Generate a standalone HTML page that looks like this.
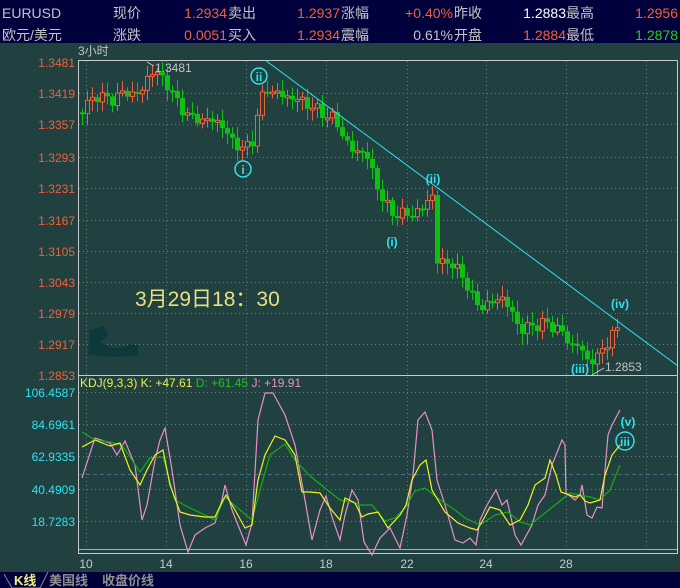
<!DOCTYPE html>
<html><head><meta charset="utf-8">
<style>
*{margin:0;padding:0}
body{width:680px;height:588px;background:#214141;position:relative;overflow:hidden;font-family:"Liberation Sans","Noto Sans CJK SC",sans-serif}
#hdr{position:absolute;left:0;top:0;width:680px;height:43px;background:#00003c}
.t{position:absolute;font-size:14px;line-height:16px;white-space:nowrap}
.g{color:#c4c4c4}.o{color:#f0603a}.w{color:#ffffff}.gr{color:#20d020}
.r{text-align:right}
#bot{position:absolute;left:0;top:572px;width:680px;height:16px;background:#00003c}
svg{position:absolute;left:0;top:0}
</style></head><body>
<div id="hdr"></div>
<div class="t g" style="left:2px;top:5px">EURUSD</div>
<div class="t g" style="left:113px;top:5px">现价</div>
<div class="t o r" style="left:160px;width:67px;top:5px">1.2934</div>
<div class="t g" style="left:228px;top:5px">卖出</div>
<div class="t o r" style="left:270px;width:70px;top:5px">1.2937</div>
<div class="t g" style="left:341px;top:5px">涨幅</div>
<div class="t o r" style="left:380px;width:73px;top:5px">+0.40%</div>
<div class="t g" style="left:454px;top:5px">昨收</div>
<div class="t w r" style="left:500px;width:66px;top:5px">1.2883</div>
<div class="t g" style="left:566px;top:5px">最高</div>
<div class="t o r" style="left:610px;width:68px;top:5px">1.2956</div>

<div class="t g" style="left:2px;top:27px">欧元/美元</div>
<div class="t g" style="left:113px;top:27px">涨跌</div>
<div class="t o r" style="left:160px;width:67px;top:27px">0.0051</div>
<div class="t g" style="left:228px;top:27px">买入</div>
<div class="t o r" style="left:270px;width:70px;top:27px">1.2934</div>
<div class="t g" style="left:341px;top:27px">震幅</div>
<div class="t g r" style="left:380px;width:73px;top:27px">0.61%</div>
<div class="t g" style="left:454px;top:27px">开盘</div>
<div class="t o r" style="left:500px;width:66px;top:27px">1.2884</div>
<div class="t g" style="left:566px;top:27px">最低</div>
<div class="t gr r" style="left:610px;width:68px;top:27px">1.2878</div>

<div id="bot"></div>
<svg width="680" height="588" id="s" font-family="Liberation Sans, Noto Sans CJK SC, sans-serif">
<text x="78" y="55" fill="#c4c4c4" font-size="12">3小时</text>
<g id="grid" stroke="#5a7a9a" stroke-dasharray="1,3" stroke-width="1"></g>
<g id="cd"></g>
<rect x="78.5" y="60.5" width="599" height="493" fill="none" stroke="#c8c8c8"/>
<line x1="78" y1="375.5" x2="678" y2="375.5" stroke="#c8c8c8"/>
<line x1="79" y1="549.5" x2="677" y2="549.5" stroke="#30e0f0"/>
<line x1="79" y1="474.5" x2="677" y2="474.5" stroke="#4a6a8a" stroke-dasharray="4,3"/>
<line x1="265" y1="60" x2="678" y2="366" stroke="#30e0f0"/>
<text x="135" y="306" fill="#e8e080" font-size="21">3月29日18：30</text>
<path d="M90 330 L104 326 L108 336 L100 342 L112 348 L126 347 L130 344 L138 346 L138 356 L120 357 L100 356 L88 354 Z" fill="#0c3a3a"/>
<g fill="none" stroke="#30e0f0" stroke-width="1.5">
<circle cx="243" cy="169" r="8"/><circle cx="259" cy="76" r="8"/><circle cx="625" cy="441" r="9"/>
</g>
<g fill="#30e0f0" font-size="12" font-weight="bold" text-anchor="middle">
<text x="243" y="174">i</text><text x="259" y="81">ii</text>
<text x="433" y="183">(ii)</text><text x="392" y="246">(i)</text>
<text x="580" y="373">(iii)</text><text x="620" y="308">(iv)</text>
<text x="628" y="426">(v)</text><text x="625" y="446">iii</text>
</g>
<text x="155" y="72" fill="#c4c4c4" font-size="12">1.3481</text>
<path d="M147 62 L154 66" stroke="#c4c4c4"/>
<text x="605" y="371" fill="#c4c4c4" font-size="12">1.2853</text>
<path d="M592 375 L604 368" stroke="#c4c4c4"/>
<text x="80" y="387" font-size="12"><tspan fill="#f0f040">KDJ(9,3,3) K: +47.61 </tspan><tspan fill="#20c020">D: +61.45 </tspan><tspan fill="#e890c8">J: +19.91</tspan></text>
<g id="kdj" fill="none" stroke-width="1.2"></g>
<g id="lab" font-size="12"></g>
<path d="M4 574 L12 588 L40 588 L48 572" fill="none" stroke="#888"/>
<text x="14" y="585" fill="#f0f080" font-size="13" font-weight="bold">K线</text>
<text x="49" y="585" fill="#909090" font-size="13" font-weight="bold">美国线</text>
<text x="102" y="585" fill="#909090" font-size="13" font-weight="bold">收盘价线</text>
</svg>
<script>
(function(){
var NS="http://www.w3.org/2000/svg";
function el(p,t,a,txt){var e=document.createElementNS(NS,t);for(var k in a)e.setAttribute(k,a[k]);if(txt)e.textContent=txt;document.getElementById(p).appendChild(e);return e;}
var vx=[86,166,246,326,407,486,566,646];
vx.forEach(function(x){el("grid","line",{x1:x+.5,y1:61,x2:x+.5,y2:553});});
var py=[62,93,124,157,188,220,251,282,313,344];
py.forEach(function(y){if(y>62)el("grid","line",{x1:79,y1:y+.5,x2:677,y2:y+.5});});
[392,424,456,489,521].forEach(function(y){el("grid","line",{x1:79,y1:y+.5,x2:677,y2:y+.5});});
var pl=["1.3481","1.3419","1.3357","1.3293","1.3231","1.3167","1.3105","1.3043","1.2979","1.2917","1.2853"];
pl.forEach(function(t,i){el("lab","text",{x:75,y:[62,93,124,157,188,220,251,282,313,344,375][i]+5,fill:"#f0603a","text-anchor":"end"},t);});
var kl=["106.4587","84.6961","62.9335","40.4909","18.7283"];
[392,424,456,489,521].forEach(function(y,i){el("lab","text",{x:75,y:y+5,fill:"#30e0f0","text-anchor":"end"},kl[i]);});
["10","14","16","18","22","24","28"].forEach(function(t,i){el("lab","text",{x:vx[i],y:568,fill:"#c8c8c8","text-anchor":"middle"},t);});
function interp(pts,x){for(var i=1;i<pts.length;i++){if(x<=pts[i][0]){var a=pts[i-1],b=pts[i];return a[1]+(b[1]-a[1])*(x-a[0])/(b[0]-a[0]);}}return pts[pts.length-1][1];}
var P=[[82,110],[95,95],[110,100],[125,92],[140,95],[150,70],[165,80],[175,100],[190,118],[205,120],[220,122],[230,140],[245,150],[252,140],[258,110],[265,88],[280,95],[300,100],[320,112],[335,120],[350,150],[365,152],[380,195],[390,212],[400,215],[420,212],[428,198],[433,195],[437,262],[450,262],[465,280],[475,305],[490,305],[500,295],[510,310],[520,330],[535,325],[545,323],[560,330],[570,345],[578,345],[588,362],[600,355],[610,335],[620,330]];
var prev=interp(P,80);
for(var x=82;x<=620;x+=5){var n=Math.sin(x*1.7)*4+Math.cos(x*0.9)*3;var c=interp(P,x)+n;var o=prev;var up=c<o;
var yt=Math.min(o,c),yb=Math.max(o,c);if(yb-yt<2){yb=yt+2;}
var wt=yt-3-Math.abs(Math.sin(x*2.3))*8,wb=yb+3+Math.abs(Math.cos(x*1.3))*8;
var col=up?"#f0603a":"#10c010";
el("cd","line",{x1:x+.5,y1:wt,x2:x+.5,y2:wb,stroke:col});
if(up)el("cd","rect",{x:x-1.5,y:yt,width:4,height:yb-yt,fill:"#214141",stroke:col});
else el("cd","rect",{x:x-2,y:yt,width:5,height:yb-yt,fill:col});
prev=c;}
function pl2(pts,col){el("kdj","polyline",{points:pts.map(function(p){return p.join(",")}).join(" "),stroke:col});}
pl2([[82,478],[95,438],[110,443],[117,455],[125,441],[135,465],[142,520],[147,505],[155,460],[160,440],[165,428],[172,470],[180,525],[188,552],[195,535],[205,528],[215,523],[222,500],[225,485],[232,510],[240,530],[246,545],[252,523],[258,420],[265,393],[273,393],[285,415],[295,445],[305,500],[312,540],[320,510],[326,496],[333,520],[340,540],[345,515],[352,490],[358,500],[364,542],[372,555],[380,538],[390,528],[400,548],[407,515],[413,475],[418,420],[425,412],[432,430],[437,480],[445,505],[455,540],[463,543],[470,538],[476,545],[480,520],[487,505],[496,490],[502,505],[507,500],[515,535],[521,545],[532,525],[538,505],[545,495],[552,465],[558,450],[562,440],[565,445],[566,493],[575,500],[580,495],[582,485],[587,515],[592,518],[597,507],[602,508],[605,470],[608,435],[612,425],[620,410]],"#e890c8");
pl2([[82,432],[95,440],[110,442],[122,445],[130,457],[140,472],[150,458],[163,457],[175,500],[190,508],[205,515],[215,520],[225,497],[240,510],[252,520],[260,490],[270,455],[285,444],[295,460],[310,476],[320,484],[330,492],[340,500],[352,502],[360,505],[372,505],[385,521],[395,518],[405,508],[415,491],[425,488],[440,500],[455,510],[465,518],[480,525],[495,515],[508,512],[520,522],[530,525],[540,517],[555,505],[570,493],[590,497],[600,500],[610,490],[620,465]],"#10b010");
pl2([[82,447],[95,440],[110,446],[120,443],[130,470],[140,485],[147,470],[155,455],[163,450],[170,485],[180,512],[190,515],[205,517],[215,517],[222,502],[226,495],[235,510],[245,528],[252,525],[258,480],[265,455],[275,436],[285,440],[295,455],[302,492],[310,492],[320,493],[330,508],[340,520],[345,498],[355,503],[362,517],[368,514],[378,512],[388,528],[400,515],[406,505],[412,480],[420,465],[426,460],[432,490],[445,512],[458,523],[470,528],[477,530],[483,520],[490,507],[500,510],[510,525],[520,520],[528,505],[535,485],[545,478],[550,460],[556,475],[561,492],[575,497],[580,495],[585,501],[590,503],[600,500],[605,475],[612,455],[620,445]],"#f0f020");
})();
</script>
</body></html>
